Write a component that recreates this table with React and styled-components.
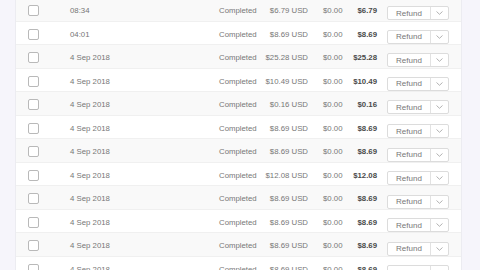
import React from "react";
import styled, { createGlobalStyle } from "styled-components";

const Global = createGlobalStyle`
  html, body { margin: 0; padding: 0; background: #f6f5fb; overflow: hidden; }
  body { font-family: "Liberation Sans", Arial, sans-serif; -webkit-font-smoothing: antialiased; }
`;

const Page = styled.div`
  width: 480px;
  height: 270px;
  overflow: hidden;
  padding-left: 15px;
  box-sizing: border-box;
`;

const Card = styled.div`
  width: 447px;
  margin-top: -2px;
  background: #ffffff;
  border-left: 1px solid #ececf1;
  border-right: 1px solid #ececf1;
  box-sizing: border-box;
`;

const Row = styled.div`
  display: grid;
  grid-template-columns: 42px 149px 41px 48px 42px 27px 72px;
  align-items: center;
  height: 23.55px;
  box-sizing: border-box;
  padding-left: 12px;
  padding-top: 2.5px;
  background: ${(p) => (p.$shaded ? "#f9f9f9" : "#ffffff")};
  border-bottom: 1px solid #f0f0f0;
  font-size: 7.8px;
  color: #777;
`;

const Check = styled.span`
  display: block;
  width: 11px;
  height: 11px;
  box-sizing: border-box;
  border: 1px solid #b9b9b9;
  border-radius: 2px;
  background: #fff;
`;

const Cell = styled.span`
  white-space: nowrap;
  text-align: ${(p) => p.$align || "left"};
  padding-left: ${(p) => p.$pad || 0}px;
  font-weight: ${(p) => (p.$bold ? 700 : 400)};
  color: ${(p) => (p.$bold ? "#4a4a4a" : "#777")};
`;

const Split = styled.div`
  align-self: start;
  margin-left: 10px;
  margin-top: 5.8px;
  width: 62px;
  height: 14px;
  display: flex;
  border: 1px solid #dcdcdc;
  border-radius: 2px;
  background: #fff;
  box-sizing: border-box;
`;

const SplitMain = styled.span`
  flex: 0 0 42px;
  display: flex;
  align-items: center;
  justify-content: center;
  border-right: 1px solid #e2e2e2;
  color: #777;
  font-size: 8px;
`;

const SplitArrow = styled.span`
  flex: 1;
  display: flex;
  align-items: center;
  justify-content: center;
`;

const rows = [
  ["08:34", "$6.79 USD", "$6.79"],
  ["04:01", "$8.69 USD", "$8.69"],
  ["4 Sep 2018", "$25.28 USD", "$25.28"],
  ["4 Sep 2018", "$10.49 USD", "$10.49"],
  ["4 Sep 2018", "$0.16 USD", "$0.16"],
  ["4 Sep 2018", "$8.69 USD", "$8.69"],
  ["4 Sep 2018", "$8.69 USD", "$8.69"],
  ["4 Sep 2018", "$12.08 USD", "$12.08"],
  ["4 Sep 2018", "$8.69 USD", "$8.69"],
  ["4 Sep 2018", "$8.69 USD", "$8.69"],
  ["4 Sep 2018", "$8.69 USD", "$8.69"],
  ["4 Sep 2018", "$8.69 USD", "$8.69"],
];

export default function App() {
  return (
    <Page>
      <Global />
      <Card>
        {rows.map(([date, amt, net], i) => (
          <Row key={i} $shaded={i % 2 === 0}>
            <Check />
            <Cell>{date}</Cell>
            <Cell>Completed</Cell>
            <Cell $align="right">{amt}</Cell>
            <Cell $pad={15}>$0.00</Cell>
            <Cell $align="right" $bold>{net}</Cell>
            <Split>
              <SplitMain>Refund</SplitMain>
              <SplitArrow>
                <svg width="7" height="4" viewBox="0 0 7 4">
                  <path d="M0.5 0.5 L3.5 3.3 L6.5 0.5" fill="none" stroke="#aaa" strokeWidth="0.9" />
                </svg>
              </SplitArrow>
            </Split>
          </Row>
        ))}
      </Card>
    </Page>
  );
}
